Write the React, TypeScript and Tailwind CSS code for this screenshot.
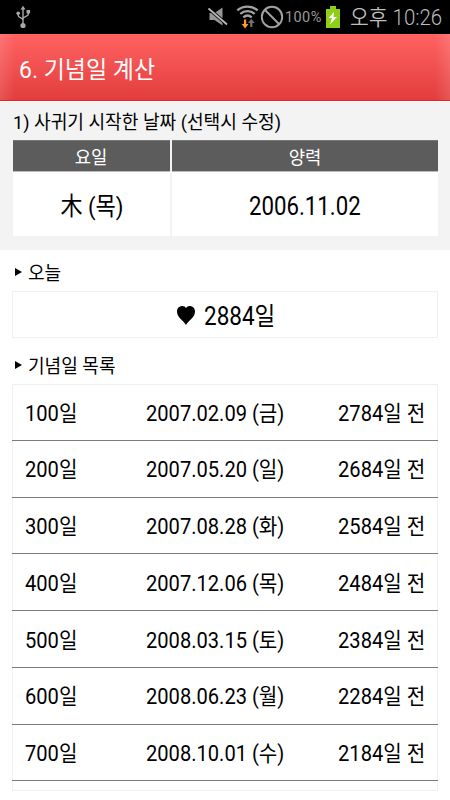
import React from 'react';

const anniversaries = [
  { days: '100일', date: '2007.02.09 (금)', passed: '2784일 전' },
  { days: '200일', date: '2007.05.20 (일)', passed: '2684일 전' },
  { days: '300일', date: '2007.08.28 (화)', passed: '2584일 전' },
  { days: '400일', date: '2007.12.06 (목)', passed: '2484일 전' },
  { days: '500일', date: '2008.03.15 (토)', passed: '2384일 전' },
  { days: '600일', date: '2008.06.23 (월)', passed: '2284일 전' },
  { days: '700일', date: '2008.10.01 (수)', passed: '2184일 전' }
];

function StatusBar() {
  return (
    <div className="flex h-[34px] items-center bg-black text-[#b8b8b8]">
      <svg className="ml-4 h-[24px] w-[15px]" viewBox="0 0 15 24" fill="none" stroke="#a9a9a9" strokeWidth="1.4">
        <path d="M7 3v17M2.2 8v2.8c0 1.8 4.8 2 4.8 4.2M12.3 6.5v3c0 2-5.3 2-5.3 4.5" />
        <circle cx="7" cy="20.5" r="2.6" fill="#a9a9a9" stroke="none" />
        <path d="M4.5 4.5 7 .7l2.5 3.8z" fill="#a9a9a9" stroke="none" />
        <circle cx="2.2" cy="8.3" r="1.8" fill="#a9a9a9" stroke="none" />
        <path d="M10.5 5h3.6v3.4h-3.6z" fill="#a9a9a9" stroke="none" />
      </svg>
      <svg className="ml-[177px] h-[20px] w-[20px]" viewBox="0 0 20 20">
        <path d="M1.5 6h5L14.5.5v18L6.5 13h-5z" fill="#969696" />
        <path d="M.5 1.5 19 17.5" stroke="#000" strokeWidth="3.4" />
        <path d="M.5 1.5 19 17.5" stroke="#bababa" strokeWidth="1.8" />
      </svg>
      <svg className="ml-[8px] h-[24px] w-[23px]" viewBox="0 0 23 24" fill="none">
        <g stroke="#a3a3a3" strokeWidth="2.3">
          <path d="M1.3 5.3c6-5 14.4-5 20.4 0" />
          <path d="M4.3 8.9c4.2-3.7 10.2-3.7 14.4 0" />
          <path d="M7.3 12.3c2.6-2.3 5.8-2.3 8.4 0" />
        </g>
        <path d="M8 14.5h2.2v4.5h2.3l-3.4 4.5L5.7 19H8z" fill="#ff9c24" />
        <path d="M14.2 22h2.2v-4h2.2l-3.3-4.2-3.3 4.2h2.2z" fill="#727272" />
      </svg>
      <svg className="ml-[1px] h-[24px] w-[24px]" viewBox="0 0 24 24" fill="none" stroke="#a2a2a2" strokeWidth="1.9">
        <circle cx="12" cy="12" r="10.2" />
        <path d="m5 5 14 14" />
      </svg>
      <span className="ml-[1px] w-[38px] whitespace-nowrap pt-[2px] text-[14.5px] tracking-[0.4px] text-[#999]">100%</span>
      <svg className="ml-[2px] h-[24px] w-[16px]" viewBox="0 0 16 24">
        <path d="M5 1h6v3h4v19H1V4h4z" fill="#8fcf18" />
        <path d="m9 7-5.5 6H7l-2 6.5L12 12H8.5z" fill="#fff" />
      </svg>
      <span className="ml-[9px] inline-block origin-left scale-x-[0.95] whitespace-nowrap pt-[2px] text-[21.5px] font-[350] text-[#bdbdbd]">
        오후 10:26
      </span>
    </div>
  );
}

function SectionTitle({ children }: { children: React.ReactNode }) {
  return (
    <h2 className="flex h-[24px] items-center pl-[15px]">
      <svg className="h-[8px] w-[7px]" viewBox="0 0 7 8">
        <path d="M0 0v8l7-4z" />
      </svg>
      <span className="ml-[6px] inline-block origin-left scale-x-[0.95] whitespace-nowrap pt-[2px] text-[19px]">
        {children}
      </span>
    </h2>
  );
}

export default function App() {
  return (
    <div className="h-[800px] w-[450px] overflow-hidden bg-white font-[Roboto,'Noto_Sans_CJK_KR',sans-serif] leading-none text-black">
      <StatusBar />

      <header className="flex h-[67px] items-center justify-between border-b border-[#e92323] bg-linear-to-b from-[#ff6262] to-[#e23d3d]">
        {/* soft highlight on both edges of the title bar */}
        <div className="h-full w-[15px] bg-linear-to-r from-white/12 to-transparent" />
        <div className="ml-[4px] inline-block flex-1 origin-left scale-x-[0.957] whitespace-nowrap pt-[5px] text-[24px] text-white">
          6. 기념일 계산
        </div>
        <div className="h-full w-[15px] bg-linear-to-l from-white/12 to-transparent" />
      </header>

      <section className="h-[149px] border-t border-white bg-[#f3f3f3] pr-3 pl-[13px]">
        <h2 className="flex h-[38px] items-center">
          <span className="inline-block origin-left scale-x-[0.953] whitespace-nowrap pt-[3px] text-[19px]">
            1) 사귀기 시작한 날짜 (선택시 수정)
          </span>
        </h2>
        <div className="grid grid-cols-[157px_266px] gap-x-[2px] text-center">
          <div className="flex h-8 items-center justify-center border-t border-b border-[#777] border-b-[#bbb] bg-[#5c5c5c] text-white">
            <span className="scale-x-[0.96] pt-[4px] text-[18.5px]">요일</span>
          </div>
          <div className="flex h-8 items-center justify-center border-t border-b border-[#777] border-b-[#bbb] bg-[#5c5c5c] text-white">
            <span className="scale-x-[0.96] pt-[4px] text-[18.5px]">양력</span>
          </div>
          <div className="flex h-[64px] items-center justify-center bg-white">
            <span className="scale-x-[0.9] whitespace-nowrap pt-[6px] pl-[2px] text-[24.5px]">木 (목)</span>
          </div>
          <div className="flex h-[64px] items-center justify-center bg-white">
            <span className="scale-x-[0.89] pt-[4px] text-[25px]">2006.11.02</span>
          </div>
        </div>
      </section>

      <section className="pt-[10px]">
        <SectionTitle>오늘</SectionTitle>
        <div className="mx-3 mt-[7px] flex h-[47px] items-center justify-center border border-[#f0f0f0] pt-[2px] pl-[3px]">
          <svg className="h-[19px] w-[18px]" viewBox="0 0 18 19">
            <path d="M9 19C7 14.5 0 12 0 5.5 0-.5 7-1.5 9 2 11-1.5 18-.5 18 5.5 18 12 11 14.5 9 19z" />
          </svg>
          <span className="-mr-2 ml-[9px] inline-block origin-left scale-x-[0.9] pt-[2px] text-[25px]">2884일</span>
        </div>
      </section>

      <section className="pt-[15px]">
        <SectionTitle>기념일 목록</SectionTitle>
        <ul className="mx-3 mt-[7px] h-[407px] border border-[#f0f0f0]">
          {anniversaries.map((item) => (
            <li
              key={item.days}
              className="-mx-px flex h-[56.75px] items-center border-b border-[#7c7c7c] px-[13px] pt-[3px] text-[21.5px] first:-mt-px"
            >
              <span className="w-[121px] origin-left scale-x-[0.935] whitespace-nowrap">{item.days}</span>
              <span className="origin-left scale-x-[0.935] whitespace-nowrap">{item.date}</span>
              <span className="ml-auto origin-right scale-x-[0.935] whitespace-nowrap">{item.passed}</span>
            </li>
          ))}
        </ul>
      </section>
    </div>
  );
}
